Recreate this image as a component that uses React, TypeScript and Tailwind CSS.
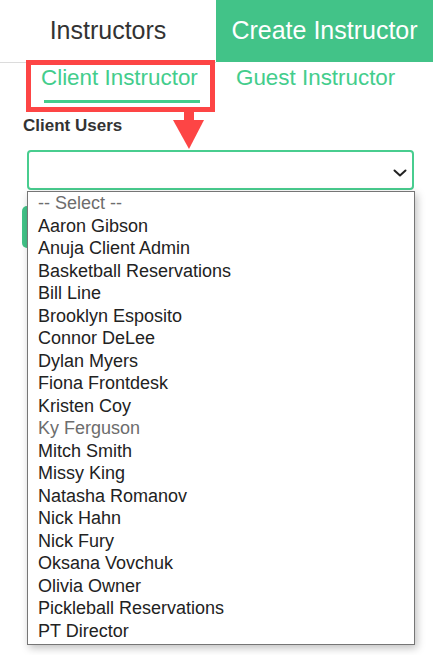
import { useState } from "react";

const users = [
    { name: "-- Select --", muted: true },
    { name: "Aaron Gibson" },
    { name: "Anuja Client Admin" },
    { name: "Basketball Reservations" },
    { name: "Bill Line" },
    { name: "Brooklyn Esposito" },
    { name: "Connor DeLee" },
    { name: "Dylan Myers" },
    { name: "Fiona Frontdesk" },
    { name: "Kristen Coy" },
    { name: "Ky Ferguson", muted: true },
    { name: "Mitch Smith" },
    { name: "Missy King" },
    { name: "Natasha Romanov" },
    { name: "Nick Hahn" },
    { name: "Nick Fury" },
    { name: "Oksana Vovchuk" },
    { name: "Olivia Owner" },
    { name: "Pickleball Reservations" },
    { name: "PT Director" }
];

function Chevron() {
    return (
        <svg width="14" height="8" viewBox="0 0 14 8" fill="none" className="absolute right-[5px] top-[17px]">
            <path d="M1.5 1.5 L7 6.5 L12.5 1.5" stroke="#222" strokeWidth="2" strokeLinecap="round" strokeLinejoin="round" />
        </svg>
    );
}

export default function App() {
    const [tab, setTab] = useState("client");

    return (
        <div className="relative h-[655px] w-[433px] overflow-hidden bg-white font-['Liberation_Sans',Arial,sans-serif]">
            {/* top tabs */}
            <nav className="flex h-[63px]">
                <div className="flex h-[63px] flex-1 items-center justify-center border-b border-[#dcdcdc] pb-px text-[25px] text-[#333]">
                    Instructors
                </div>
                <div className="flex h-[62px] w-[217px] items-center justify-center bg-[#42c388] text-[25px] text-white">
                    Create Instructor
                </div>
            </nav>

            {/* sub tabs */}
            <div className="flex gap-[36px] pl-[41px]">
                <button type="button" onClick={() => setTab("client")} className="text-left">
                    <div className="text-[22.4px] leading-[30px] text-[#43cd8c]">Client Instructor</div>
                    <div className={tab === "client" ? "ml-[3px] mt-[7px] h-[3px] w-[156px] bg-[#43cd8c]" : "mt-[7px] h-[3px]"} />
                </button>
                <button type="button" onClick={() => setTab("guest")} className="text-left">
                    <div className="text-[22.4px] leading-[30px] text-[#43cd8c]">Guest Instructor</div>
                    <div className={tab === "guest" ? "ml-[3px] mt-[7px] h-[3px] w-[156px] bg-[#43cd8c]" : "mt-[7px] h-[3px]"} />
                </button>
            </div>

            {/* form */}
            <div className="pl-[23px] pt-[13px]">
                <label className="block text-[17px] font-bold leading-[20px] text-[#333]">Client Users</label>
                <div className="relative ml-[4px] mt-[14px] h-[40px] w-[387px] rounded-[4px] border-2 border-[#48cd8f] bg-white">
                    <Chevron />
                </div>
                <div className="ml-[-1px] mt-[16px] h-[42px] w-[200px] rounded-[5px] bg-[#42c388]" />
            </div>

            {/* open dropdown list */}
            <ul className="absolute left-[27px] top-[191px] w-[388px] border border-[#767676] bg-white pb-[2px] shadow-[2px_3px_8px_rgba(0,0,0,0.25)]">
                {users.map((u) => (
                    <li
                        key={u.name}
                        className={
                            u.muted
                                ? "pl-[10px] text-[18px] leading-[22.5px] text-[#6d6d6d]"
                                : "pl-[10px] text-[18px] leading-[22.5px] text-[#222]"
                        }
                    >
                        {u.name}
                    </li>
                ))}
            </ul>

            {/* annotation: red box + arrow */}
            <div className="pointer-events-none absolute left-[26px] top-[60px] h-[52px] w-[189px] border-[5px] border-[#fd4545]" />
            <svg width="31" height="38" viewBox="0 0 31 38" className="pointer-events-none absolute left-[173px] top-[111px]">
                <rect x="11" y="0" width="10" height="10" fill="#fd4545" />
                <polygon points="0,9 31,9 16,38" fill="#fd4545" />
            </svg>
        </div>
    );
}
